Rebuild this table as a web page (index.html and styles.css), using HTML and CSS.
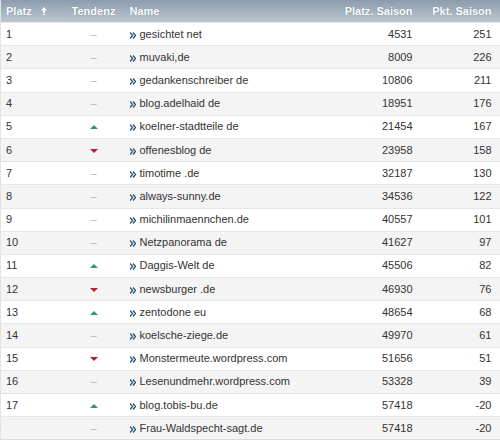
FILE: index.html
```html
<!DOCTYPE html>
<html>
<head>
<meta charset="utf-8">
<link rel="stylesheet" href="styles.css">
</head>
<body>
<table class="rank">
  <colgroup>
    <col class="w-platz"><col class="w-tend"><col class="w-name"><col class="w-ps"><col class="w-pkt">
  </colgroup>
  <thead>
    <tr>
      <th class="c-platz">Platz <svg class="sort" width="6" height="8" viewBox="0 0 6 8"><path d="M3 0 L6 3.5 H4 V6 H2 V3.5 H0 Z" fill="#fff"/><rect x="2" y="6.8" width="2" height="1.2" fill="#fff"/></svg></th>
      <th class="c-tend">Tendenz</th>
      <th class="c-name">Name</th>
      <th class="c-ps">Platz. Saison</th>
      <th class="c-pkt">Pkt. Saison</th>
    </tr>
  </thead>
  <tbody>
    <tr><td class="c-platz">1</td><td class="c-tend"><span class="dash">–</span></td><td class="c-name"><svg class="go" width="6" height="7" viewBox="0 0 6 7"><path d="M0 0.5 L2.5 3.5 L0 6.5 M3 0.5 L5.5 3.5 L3 6.5" stroke="#2b5877" stroke-width="1.4" fill="none"/></svg>gesichtet net</td><td class="c-ps">4531</td><td class="c-pkt">251</td></tr>
    <tr><td class="c-platz">2</td><td class="c-tend"><span class="dash">–</span></td><td class="c-name"><svg class="go" width="6" height="7" viewBox="0 0 6 7"><path d="M0 0.5 L2.5 3.5 L0 6.5 M3 0.5 L5.5 3.5 L3 6.5" stroke="#2b5877" stroke-width="1.4" fill="none"/></svg>muvaki,de</td><td class="c-ps">8009</td><td class="c-pkt">226</td></tr>
    <tr><td class="c-platz">3</td><td class="c-tend"><span class="dash">–</span></td><td class="c-name"><svg class="go" width="6" height="7" viewBox="0 0 6 7"><path d="M0 0.5 L2.5 3.5 L0 6.5 M3 0.5 L5.5 3.5 L3 6.5" stroke="#2b5877" stroke-width="1.4" fill="none"/></svg>gedankenschreiber de</td><td class="c-ps">10806</td><td class="c-pkt">211</td></tr>
    <tr><td class="c-platz">4</td><td class="c-tend"><span class="dash">–</span></td><td class="c-name"><svg class="go" width="6" height="7" viewBox="0 0 6 7"><path d="M0 0.5 L2.5 3.5 L0 6.5 M3 0.5 L5.5 3.5 L3 6.5" stroke="#2b5877" stroke-width="1.4" fill="none"/></svg>blog.adelhaid de</td><td class="c-ps">18951</td><td class="c-pkt">176</td></tr>
    <tr><td class="c-platz">5</td><td class="c-tend"><span class="up"></span></td><td class="c-name"><svg class="go" width="6" height="7" viewBox="0 0 6 7"><path d="M0 0.5 L2.5 3.5 L0 6.5 M3 0.5 L5.5 3.5 L3 6.5" stroke="#2b5877" stroke-width="1.4" fill="none"/></svg>koelner-stadtteile de</td><td class="c-ps">21454</td><td class="c-pkt">167</td></tr>
    <tr><td class="c-platz">6</td><td class="c-tend"><span class="down"></span></td><td class="c-name"><svg class="go" width="6" height="7" viewBox="0 0 6 7"><path d="M0 0.5 L2.5 3.5 L0 6.5 M3 0.5 L5.5 3.5 L3 6.5" stroke="#2b5877" stroke-width="1.4" fill="none"/></svg>offenesblog de</td><td class="c-ps">23958</td><td class="c-pkt">158</td></tr>
    <tr><td class="c-platz">7</td><td class="c-tend"><span class="dash">–</span></td><td class="c-name"><svg class="go" width="6" height="7" viewBox="0 0 6 7"><path d="M0 0.5 L2.5 3.5 L0 6.5 M3 0.5 L5.5 3.5 L3 6.5" stroke="#2b5877" stroke-width="1.4" fill="none"/></svg>timotime .de</td><td class="c-ps">32187</td><td class="c-pkt">130</td></tr>
    <tr><td class="c-platz">8</td><td class="c-tend"><span class="dash">–</span></td><td class="c-name"><svg class="go" width="6" height="7" viewBox="0 0 6 7"><path d="M0 0.5 L2.5 3.5 L0 6.5 M3 0.5 L5.5 3.5 L3 6.5" stroke="#2b5877" stroke-width="1.4" fill="none"/></svg>always-sunny.de</td><td class="c-ps">34536</td><td class="c-pkt">122</td></tr>
    <tr><td class="c-platz">9</td><td class="c-tend"><span class="dash">–</span></td><td class="c-name"><svg class="go" width="6" height="7" viewBox="0 0 6 7"><path d="M0 0.5 L2.5 3.5 L0 6.5 M3 0.5 L5.5 3.5 L3 6.5" stroke="#2b5877" stroke-width="1.4" fill="none"/></svg>michilinmaennchen.de</td><td class="c-ps">40557</td><td class="c-pkt">101</td></tr>
    <tr><td class="c-platz">10</td><td class="c-tend"><span class="dash">–</span></td><td class="c-name"><svg class="go" width="6" height="7" viewBox="0 0 6 7"><path d="M0 0.5 L2.5 3.5 L0 6.5 M3 0.5 L5.5 3.5 L3 6.5" stroke="#2b5877" stroke-width="1.4" fill="none"/></svg>Netzpanorama de</td><td class="c-ps">41627</td><td class="c-pkt">97</td></tr>
    <tr><td class="c-platz">11</td><td class="c-tend"><span class="up"></span></td><td class="c-name"><svg class="go" width="6" height="7" viewBox="0 0 6 7"><path d="M0 0.5 L2.5 3.5 L0 6.5 M3 0.5 L5.5 3.5 L3 6.5" stroke="#2b5877" stroke-width="1.4" fill="none"/></svg>Daggis-Welt de</td><td class="c-ps">45506</td><td class="c-pkt">82</td></tr>
    <tr><td class="c-platz">12</td><td class="c-tend"><span class="down"></span></td><td class="c-name"><svg class="go" width="6" height="7" viewBox="0 0 6 7"><path d="M0 0.5 L2.5 3.5 L0 6.5 M3 0.5 L5.5 3.5 L3 6.5" stroke="#2b5877" stroke-width="1.4" fill="none"/></svg>newsburger .de</td><td class="c-ps">46930</td><td class="c-pkt">76</td></tr>
    <tr><td class="c-platz">13</td><td class="c-tend"><span class="up"></span></td><td class="c-name"><svg class="go" width="6" height="7" viewBox="0 0 6 7"><path d="M0 0.5 L2.5 3.5 L0 6.5 M3 0.5 L5.5 3.5 L3 6.5" stroke="#2b5877" stroke-width="1.4" fill="none"/></svg>zentodone eu</td><td class="c-ps">48654</td><td class="c-pkt">68</td></tr>
    <tr><td class="c-platz">14</td><td class="c-tend"><span class="dash">–</span></td><td class="c-name"><svg class="go" width="6" height="7" viewBox="0 0 6 7"><path d="M0 0.5 L2.5 3.5 L0 6.5 M3 0.5 L5.5 3.5 L3 6.5" stroke="#2b5877" stroke-width="1.4" fill="none"/></svg>koelsche-ziege.de</td><td class="c-ps">49970</td><td class="c-pkt">61</td></tr>
    <tr><td class="c-platz">15</td><td class="c-tend"><span class="down"></span></td><td class="c-name"><svg class="go" width="6" height="7" viewBox="0 0 6 7"><path d="M0 0.5 L2.5 3.5 L0 6.5 M3 0.5 L5.5 3.5 L3 6.5" stroke="#2b5877" stroke-width="1.4" fill="none"/></svg>Monstermeute.wordpress.com</td><td class="c-ps">51656</td><td class="c-pkt">51</td></tr>
    <tr><td class="c-platz">16</td><td class="c-tend"><span class="dash">–</span></td><td class="c-name"><svg class="go" width="6" height="7" viewBox="0 0 6 7"><path d="M0 0.5 L2.5 3.5 L0 6.5 M3 0.5 L5.5 3.5 L3 6.5" stroke="#2b5877" stroke-width="1.4" fill="none"/></svg>Lesenundmehr.wordpress.com</td><td class="c-ps">53328</td><td class="c-pkt">39</td></tr>
    <tr><td class="c-platz">17</td><td class="c-tend"><span class="up"></span></td><td class="c-name"><svg class="go" width="6" height="7" viewBox="0 0 6 7"><path d="M0 0.5 L2.5 3.5 L0 6.5 M3 0.5 L5.5 3.5 L3 6.5" stroke="#2b5877" stroke-width="1.4" fill="none"/></svg>blog.tobis-bu.de</td><td class="c-ps">57418</td><td class="c-pkt">-20</td></tr>
    <tr><td class="c-platz"></td><td class="c-tend"><span class="dash">–</span></td><td class="c-name"><svg class="go" width="6" height="7" viewBox="0 0 6 7"><path d="M0 0.5 L2.5 3.5 L0 6.5 M3 0.5 L5.5 3.5 L3 6.5" stroke="#2b5877" stroke-width="1.4" fill="none"/></svg>Frau-Waldspecht-sagt.de</td><td class="c-ps">57418</td><td class="c-pkt">-20</td></tr>
  </tbody>
</table>
</body>
</html>
```

FILE: styles.css
```css
html, body {
  margin: 0;
  padding: 0;
  background: #fff;
}
.rank {
  width: 499px;
  border-collapse: collapse;
  font-family: "Liberation Sans", Arial, sans-serif;
  font-size: 11px;
  color: #333;
  border-left: 1px solid #e2e2e2;
  border-bottom: 1px solid #dcdcdc;
  table-layout: fixed;
}
.w-platz { width: 62px; }
.w-tend { width: 62px; }
.w-name { width: 216px; }
.w-ps { width: 72px; }
.w-pkt { width: 87px; }
.rank th,
.rank td {
  padding: 0;
  white-space: nowrap;
  overflow: hidden;
  line-height: 13px;
}
.rank th {
  height: 22px;
  font-weight: bold;
  color: #fff;
  text-shadow: 0 0 1px rgba(60, 80, 100, 0.6);
  background: linear-gradient(#8c9cad, #bcc7d1);
  text-align: left;
}
.rank td {
  height: 22.2px;
  border-top: 1px solid #e6e6e6;
}
.rank tbody tr:nth-child(even) td {
  background: #f4f4f5;
}
.rank .c-platz { padding-left: 5px; }
.rank .c-tend { text-align: center; }
.rank .c-name { padding-left: 5px; }
.rank .c-ps { text-align: right; }
.rank .c-pkt { text-align: right; padding-right: 8px; }
.sort {
  margin-left: 6px;
  vertical-align: 0;
}
.dash {
  color: #b5b5b5;
}
.go {
  margin-right: 4px;
  vertical-align: -1px;
}
.up, .down {
  display: inline-block;
  width: 0;
  height: 0;
  border-left: 4px solid transparent;
  border-right: 4px solid transparent;
  vertical-align: 1px;
}
.up {
  border-bottom: 4px solid #2f9a72;
}
.down {
  border-top: 4px solid #b3202c;
}
```
